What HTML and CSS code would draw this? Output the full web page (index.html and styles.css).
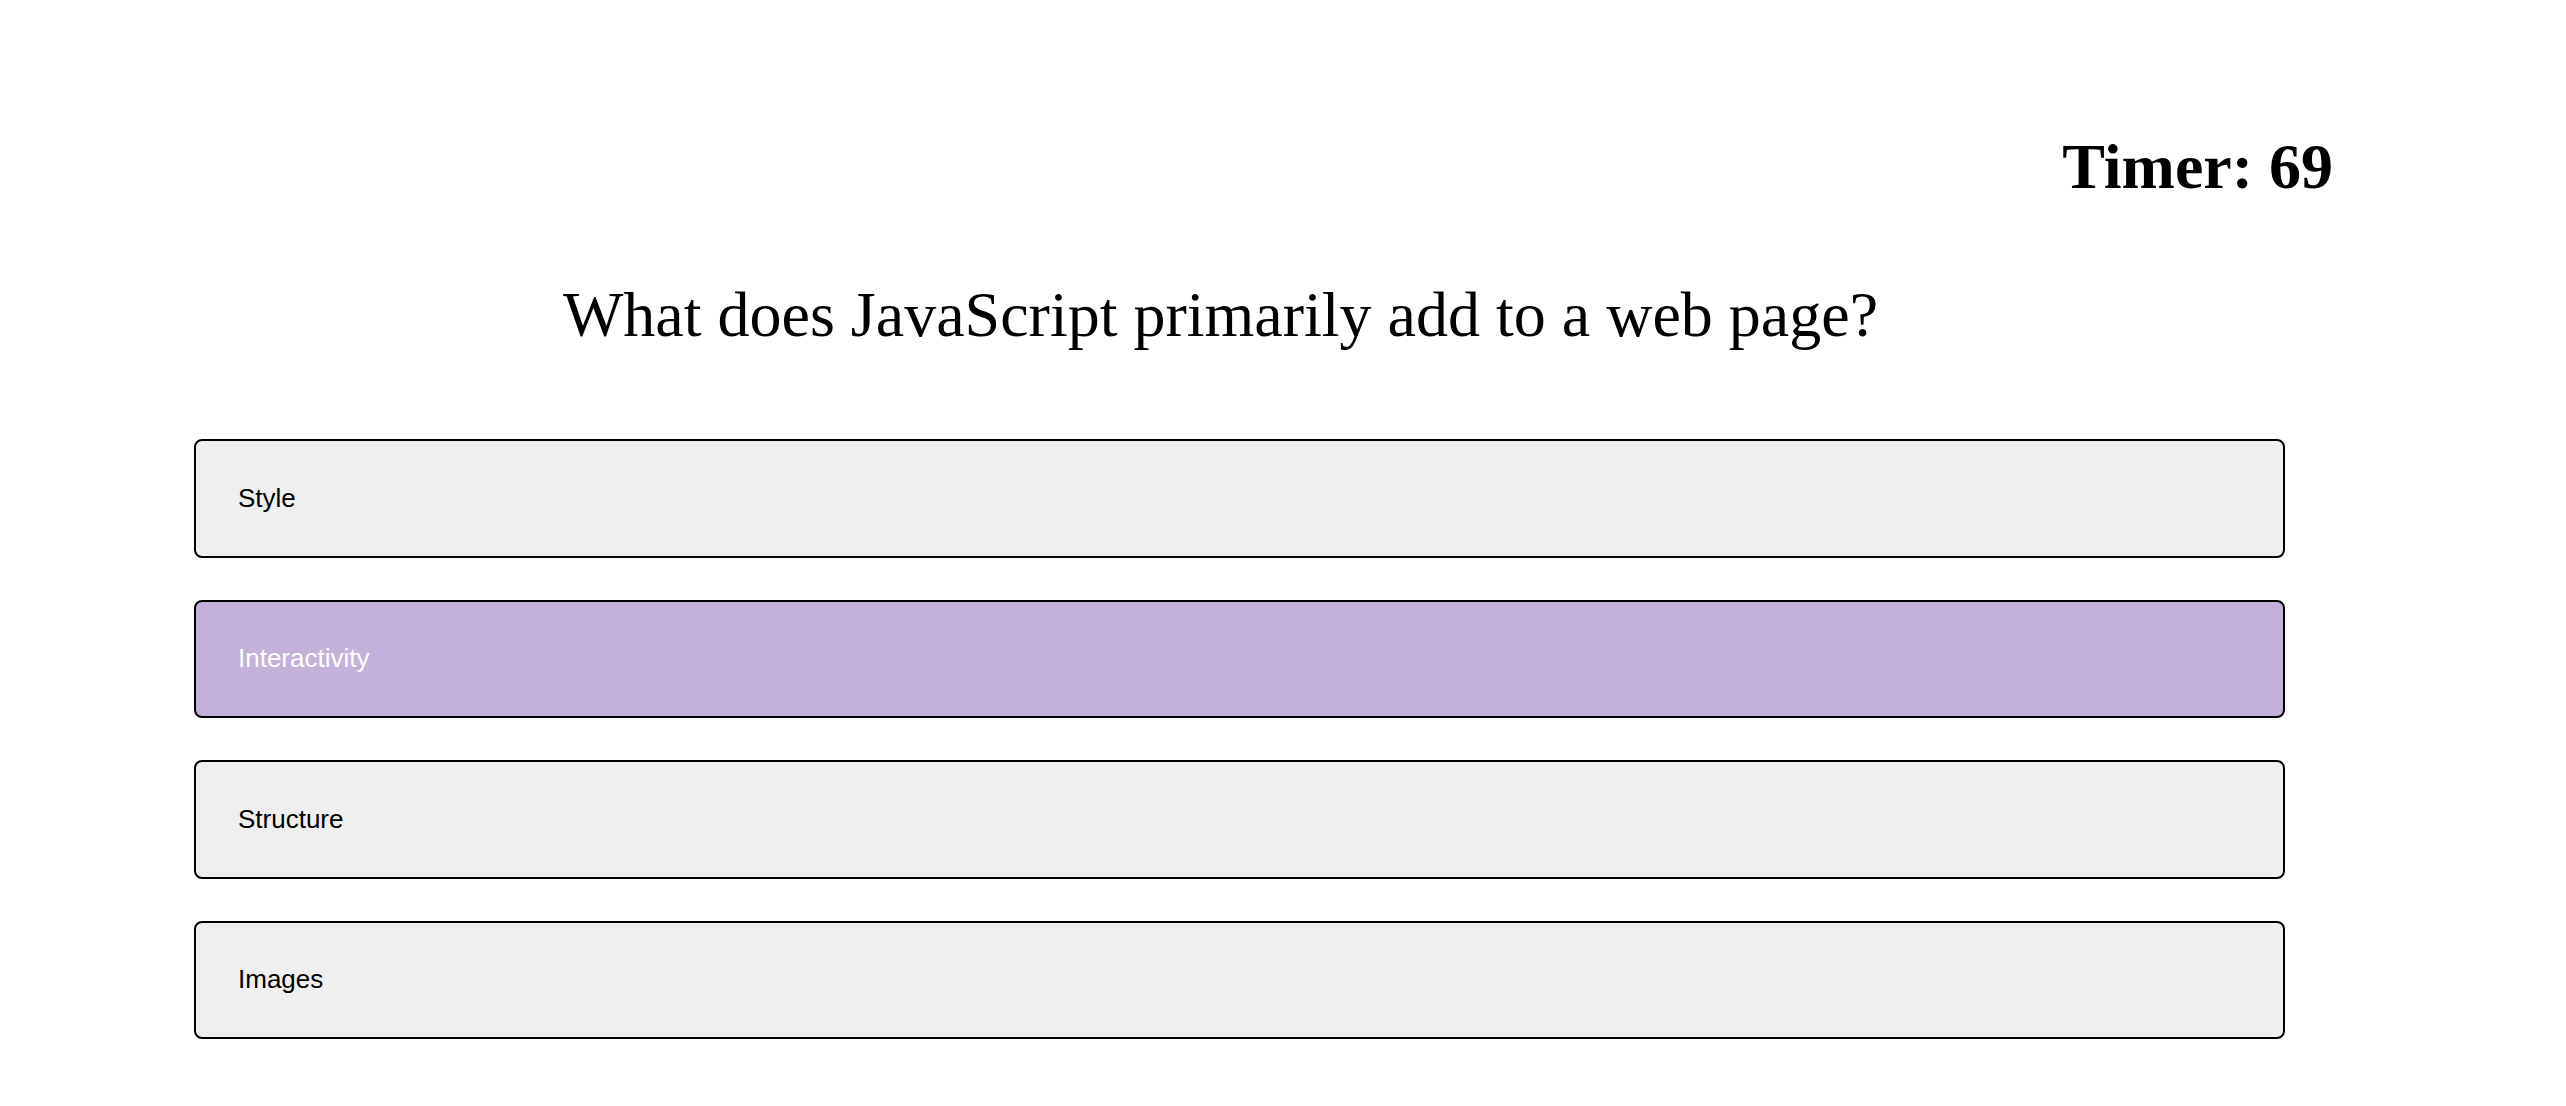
FILE: index.html
```html
<!DOCTYPE html>
<html lang="en">
<head>
<meta charset="utf-8">
<title>Quiz</title>
<link rel="stylesheet" href="styles.css">
</head>
<body>
<main class="quiz">
  <div class="timer">Timer: 69</div>
  <h2 class="question">What does JavaScript primarily add to a web page?</h2>
  <div class="options">
    <button class="option">Style</button>
    <button class="option option-selected">Interactivity</button>
    <button class="option">Structure</button>
    <button class="option">Images</button>
  </div>
</main>
</body>
</html>
```
FILE: styles.css
```css
html, body {
  margin: 0;
  padding: 0;
  background: #ffffff;
}

body {
  font-family: "Liberation Serif", "Times New Roman", serif;
  color: #000000;
}

.quiz {
  width: 2139px;
  margin-left: 194px;
  padding-top: 131px;
  display: flex;
  flex-direction: column;
}

.timer {
  font-size: 64px;
  font-weight: bold;
  line-height: 72px;
  text-align: right;
}

.question {
  margin: 76px 0 0 0;
  width: 2053px;
  font-size: 64px;
  font-weight: normal;
  line-height: 72px;
  text-align: center;
}

.options {
  margin-top: 88px;
  width: 2091px;
  display: flex;
  flex-direction: column;
  gap: 42px;
}

.option {
  box-sizing: border-box;
  height: 118.5px;
  width: 100%;
  margin: 0;
  padding: 0 42px;
  display: flex;
  align-items: center;
  background: #efefef;
  border: 2px solid #000000;
  border-radius: 8px;
  font-family: "Liberation Sans", Arial, sans-serif;
  font-size: 26px;
  color: #000000;
  text-align: left;
  cursor: pointer;
}

.option-selected {
  background: #c3b1dc;
  color: #ffffff;
}
```
